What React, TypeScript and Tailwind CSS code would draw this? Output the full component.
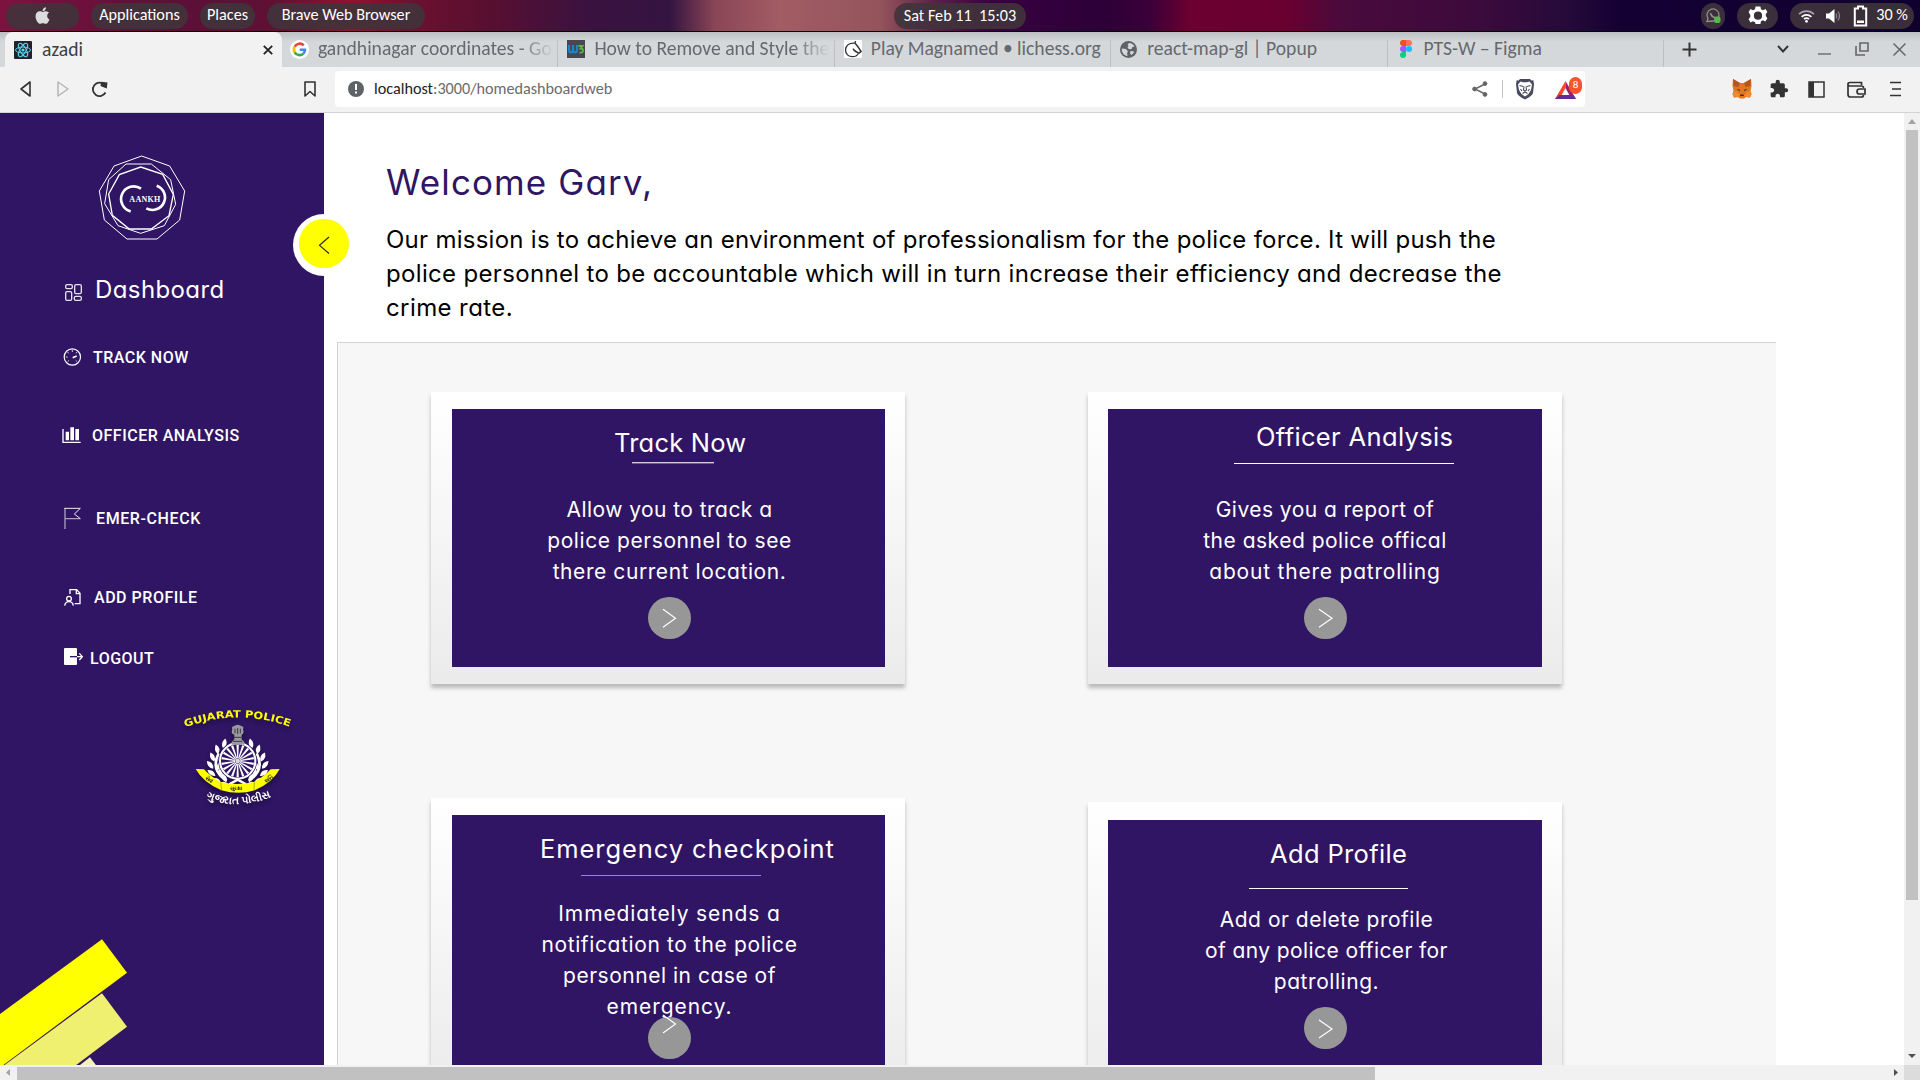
import type { ReactNode } from "react";
import { FaApple } from "react-icons/fa";
import { MdExtension } from "react-icons/md";

const UI = "font-['Carlito','Lato',sans-serif]";
const POP = "font-['Inter',sans-serif] [font-feature-settings:'cv11']";
const ROB = "font-['Roboto',sans-serif] font-medium text-[16px] leading-6 text-white whitespace-pre";

function Pill({ className, children }: { className: string; children: ReactNode }) {
  return (
    <div className={`flex h-[26px] shrink-0 items-center justify-center whitespace-pre rounded-full bg-[#3f343b]/90 ${className}`}>
      {children}
    </div>
  );
}

function TopBar() {
  return (
    <header
      className={`flex h-8 items-center border-b border-black bg-[linear-gradient(90deg,#7d1240_0px,#65103a_120px,#5c1038_170px,#5f1034_270px,#8a1630_350px,#6e1030_410px,#5a0f2f_480px,#3a1240_590px,#341440_670px,#8a4656_715px,#a25c64_780px,#94545c_880px,#5c2048_935px,#3a0042_990px,#2c0038_1100px,#3a0038_1150px,#6c0030_1190px,#680030_1290px,#4a0a3c_1340px,#3c0a3c_1480px,#240a3a_1570px,#150034_1620px,#0f0030_1920px)] pl-1.5 pr-1.5 text-[16.2px] leading-none text-white ${UI}`}
    >
      <Pill className="w-[73px]">
        <FaApple className="size-[19px] text-[#dcdcdc]" />
      </Pill>
      <Pill className="ml-3 w-[97px]">Applications</Pill>
      <Pill className="ml-3 w-[55px]">Places</Pill>
      <Pill className="ml-3 w-[158px]">Brave Web Browser</Pill>
      <Pill className="ml-[469px] w-[132px] pt-0.5">{"Sat Feb 11  15:03"}</Pill>
      <Pill className="ml-auto w-6">
        <svg width="16" height="17" viewBox="0 0 16 17" fill="none">
          <path d="M2 14.5 3 11.3A6 6 0 1 1 8 14l-6 .5Z" stroke="#8f8f8f" strokeWidth="1.3" />
          <path d="M5.5 6c.5 2.500 2 4 4.500 4.500" stroke="#8f8f8f" strokeWidth="1.5" />
          <rect x="9" y="9.500" width="6.500" height="6.500" rx="2" fill="#55b848" />
        </svg>
      </Pill>
      <Pill className="ml-3 w-[41px]">
        <svg width="20" height="20" viewBox="0 0 20 20">
          <path
            fillRule="evenodd"
            fill="#fff"
            d="M7.600 0.500h4.800l.6 2.800 2 .9 2.500-1.300 1.900 3.200-1.600 2v2l1.600 2.100-2 3.200-2.500-1.200-1.900 1-.6 2.800H7.600L7 16.200l-2-1-2.500 1.200-1.900-3.200 1.700-2.100v-2L.6 6.100l1.900-3.200L5 4.200l2-.9zM10 5.600a4.100 4.100 0 1 0 0 8.200 4.100 4.100 0 0 0 0-8.200z"
          />
        </svg>
      </Pill>
      <Pill className="ml-3 w-[124px] pl-0.5">
        <svg width="17" height="14" viewBox="0 0 17 14" fill="none" strokeWidth="1.700">
          <path d="M1 5.200a10.500 10.500 0 0 1 15 0" stroke="#a9a4ae" />
          <path d="M3.600 7.800a7 7 0 0 1 9.800 0" stroke="#fff" />
          <path d="M6 10.200a3.500 3.500 0 0 1 5 0" stroke="#fff" />
          <circle cx="8.500" cy="12.300" r="1.400" fill="#fff" />
        </svg>
        <svg className="ml-[11px]" width="15" height="14" viewBox="0 0 15 14" fill="none">
          <path d="M0 4.500h3L8.500 0v14L3 9.500H0z" fill="#fff" />
          <path d="M10 4.500q1.500 2.500 0 5M12 2.500q3 4.500 0 9" stroke="#8d8893" strokeWidth="1.200" />
        </svg>
        <svg className="ml-3" width="15" height="22" viewBox="0 0 15 22" fill="none">
          <path d="M5 1.500h5v2h3.200v17H1.800v-17H5z" stroke="#fff" strokeWidth="2" />
          <rect x="4" y="15.500" width="7" height="2.500" fill="#fff" />
        </svg>
        <span className="ml-2">30 %</span>
      </Pill>
    </header>
  );
}

function ReactFavicon() {
  return (
    <svg width="18" height="18" viewBox="0 0 18 18" fill="none">
      <rect width="18" height="18" rx="1" fill="#20232a" />
      <g stroke="#5ccfee" strokeWidth="1">
        <ellipse cx="9" cy="9" rx="7.500" ry="3" />
        <ellipse cx="9" cy="9" rx="7.500" ry="3" transform="rotate(60 9 9)" />
        <ellipse cx="9" cy="9" rx="7.500" ry="3" transform="rotate(120 9 9)" />
      </g>
      <circle cx="9" cy="9" r="1.600" fill="#5ccfee" />
    </svg>
  );
}

function GoogleFavicon() {
  return (
    <svg width="19" height="19" viewBox="0 0 19 19" fill="none">
      <circle cx="9.500" cy="9.500" r="9.500" fill="#fff" />
      <g strokeWidth="2.600">
        <path d="M13.700 5.400A5.500 5.500 0 0 0 4.700 6.700" stroke="#ea4335" />
        <path d="M4.700 6.700a5.500 5.500 0 0 0 0 5.600" stroke="#fbbc05" />
        <path d="M4.700 12.300a5.500 5.500 0 0 0 8.600 1.300" stroke="#34a853" />
        <path d="M13.300 13.600A5.300 5.300 0 0 0 15 9.700H9.700" stroke="#4285f4" />
      </g>
    </svg>
  );
}

function W3Favicon() {
  return (
    <svg width="18" height="18" viewBox="0 0 18 18" fill="none">
      <rect width="18" height="18" fill="#454853" />
      <path d="M2 5v4.500q0 3 2 3t2-3V5m0 4.500q0 3 2 3t2-3V5" stroke="#1689cc" strokeWidth="2" />
      <path d="M11.500 6h4l-2 2.500q2.500 0 2.500 2.200 0 2.300-3.500 1.800" stroke="#6fae3a" strokeWidth="1.800" />
    </svg>
  );
}

function LichessFavicon() {
  return (
    <svg width="18" height="18" viewBox="0 0 18 18" fill="none">
      <rect width="18" height="18" rx="1" fill="#fff" />
      <path d="M11.500 1 11 3.200C5 2.500 1.500 5.500 1.500 10c0 4 3 6.700 6.800 6.700 3 0 5-1.200 6-3.200" stroke="#333" strokeWidth="1.300" />
      <path d="M11 3.200c2 1.800 4 5 6 8.300l-2 1.600c-2.500-1-6-3.300-5.500-4.700" stroke="#333" strokeWidth="1.500" />
    </svg>
  );
}

function GlobeFavicon() {
  return (
    <svg width="17" height="17" viewBox="0 0 17 17">
      <circle cx="8.500" cy="8.500" r="8.500" fill="#5f6368" />
      <path d="M1.800 7.500 6 8l2 2.500-1 1.500.5 3C4 14.500 1.500 11.500 1.800 7.500zM9 1.900c2.500 0 4.600 1.500 5.600 3.600l-2.100.5-1 2-2.500.2-1.500-1.700 1-1.500L7.500 4z" fill="#d4d8db" />
      <path d="m10.500 10 3 .2.500 1.300-2.500 2.500-1.500-1.500z" fill="#d4d8db" />
    </svg>
  );
}

function FigmaFavicon() {
  return (
    <svg width="12" height="18" viewBox="0 0 12 18">
      <path d="M3 0h3v6H3a3 3 0 0 1 0-6z" fill="#f24e1e" />
      <path d="M6 0h3a3 3 0 0 1 0 6H6z" fill="#ff7262" />
      <path d="M3 6h3v6H3a3 3 0 0 1 0-6z" fill="#a259ff" />
      <circle cx="9" cy="9" r="3" fill="#1abcfe" />
      <path d="M3 12h3v3a3 3 0 1 1-3-3z" fill="#0acf83" />
    </svg>
  );
}

const tabs: { icon: ReactNode; title: string; fade?: boolean; pad: string; gap: string }[] = [
  { icon: <GoogleFavicon />, title: "gandhinagar coordinates - Goo", fade: true, pad: "pl-2", gap: "ml-[9px]" },
  { icon: <W3Favicon />, title: "How to Remove and Style the", fade: true, pad: "pl-[9px]", gap: "ml-[9px]" },
  { icon: <LichessFavicon />, title: "Play Magnamed • lichess.org", pad: "pl-[9px]", gap: "ml-[9px]" },
  { icon: <GlobeFavicon />, title: "react-map-gl | Popup", pad: "pl-[9px]", gap: "ml-[10px]" },
  { icon: <FigmaFavicon />, title: "PTS-W – Figma", pad: "pl-3", gap: "ml-3" },
];

function TabStrip() {
  return (
    <div className={`flex h-[35px] bg-[linear-gradient(180deg,#bcc0c3,#d4d8db_10px)] pl-[5px] text-[19.6px] leading-none ${UI}`}>
      <div className="flex w-[277px] items-center rounded-t-lg bg-[#f2f2f2] pl-[9px] pr-[9px] text-[#3b3f44]">
        <ReactFavicon />
        <span className="ml-2.5">azadi</span>
        <svg className="ml-auto" width="10" height="10" viewBox="0 0 10 10" stroke="#222" strokeWidth="1.800">
          <path d="m.8.8 8.400 8.400M9.200.8.8 9.200" />
        </svg>
      </div>
      {tabs.map((t) => (
        <div key={t.title} className={`flex w-[276.400px] shrink-0 items-center pb-px text-[#66696d] ${t.pad}`}>
          {t.icon}
          <div className={`w-[235px] overflow-hidden whitespace-nowrap py-1 ${t.gap} ${t.fade ? "[mask-image:linear-gradient(90deg,#000_200px,transparent_236px)]" : ""}`}>
            {t.title}
          </div>
          <div className="-mb-px ml-auto h-[27px] w-px shrink-0 self-end bg-[#bcc1c6]" />
        </div>
      ))}
      <div className="flex grow items-center pb-px pl-[18px] pr-3.5">
        <svg width="15" height="15" viewBox="0 0 15 15" stroke="#333" strokeWidth="2"><path d="M7.500.5v14M.5 7.500h14" /></svg>
        <svg className="ml-auto" width="12" height="8" viewBox="0 0 12 8" fill="none" stroke="#333" strokeWidth="1.900"><path d="m1 1 5 5.500L11 1" /></svg>
        <svg className="ml-[29px]" width="13" height="16" viewBox="0 0 13 16"><path d="M0 13h13" stroke="#777" strokeWidth="1.600" /></svg>
        <svg className="ml-6" width="14" height="14" viewBox="0 0 14 14" fill="none" stroke="#666" strokeWidth="1.600"><path d="M5 1h8v8H5zM1 4v9h9" /></svg>
        <svg className="ml-6" width="13" height="13" viewBox="0 0 13 13" stroke="#666" strokeWidth="1.500"><path d="m.5.5 12 12M12.500.5l-12 12" /></svg>
      </div>
    </div>
  );
}

function Toolbar() {
  return (
    <div className={`flex h-[46px] items-center border-b border-[#d0d3d8] bg-[#f2f2f2] pb-px pl-5 pr-[19px] ${UI}`}>
      <svg width="11" height="16" viewBox="0 0 11 16" fill="none" stroke="#333" strokeWidth="1.600" strokeLinejoin="round"><path d="M10 1v14L1 8z" /></svg>
      <svg className="ml-[26px]" width="12" height="16" viewBox="0 0 12 16" fill="none" stroke="#b5b5b5" strokeWidth="1.500" strokeLinejoin="round"><path d="M1 1v14l10-7z" /></svg>
      <svg className="ml-[22px]" width="17" height="17" viewBox="0 0 17 17" fill="none" stroke="#333" strokeWidth="1.800">
        <path d="M13.200 3.500A6.700 6.700 0 1 0 14.500 11.500" />
        <path d="M10.500 4.500 11 1.800l4.500.4-.5 4z" fill="#333" />
      </svg>
      <svg className="ml-[196px]" width="12" height="16" viewBox="0 0 12 16" fill="none" stroke="#333" strokeWidth="1.600" strokeLinejoin="round"><path d="M1 1h10v14l-5-4.500L1 15z" /></svg>
      <div className="ml-[19px] flex h-9 w-[1250px] items-center rounded bg-white pl-[13px] pr-[3px]">
        <svg width="16" height="16" viewBox="0 0 16 16"><circle cx="8" cy="8" r="8" fill="#5f6368" /><path d="M7 3h2v6H7zM7 10.500h2v2H7z" fill="#fff" /></svg>
        <span className="ml-2.5 text-[16.2px] text-[#6b6b6b]"><span className="text-[#222]">localhost</span>:3000/homedashboardweb</span>
        <svg className="ml-auto" width="16" height="16" viewBox="0 0 16 16" fill="#666" stroke="#666">
          <path d="M13 3 3 8l10 5" fill="none" strokeWidth="1.400" /><circle cx="13" cy="2.600" r="1.900" /><circle cx="2.600" cy="8" r="1.900" /><circle cx="13" cy="13.400" r="1.900" />
        </svg>
        <div className="ml-3.5 h-[18px] w-px bg-[#c4c4c4]" />
        <svg className="ml-3" width="20" height="22" viewBox="0 0 20 22">
          <path d="M5 1h10l1.300 1.500 2-.3L19 6l-1 9c-.5 2-3 4-8 6.500C5 19 2.500 17 2 15L1 6l.7-3.800 2 .3z" fill="#484a5e" />
          <path d="M5.500 3.500 8 4.200h4l2.500-.7L17 6.500 16 12l-2.500 4L10 18.500 6.500 16 4 12 3 6.500z" fill="#fff" />
          <path d="m4.500 7.500 3.800 1M15.500 7.500l-3.800 1M9 8.500 8.500 12l1.500 1.200 1.500-1.200L11 8.500M7.500 15.500 10 14l2.500 1.500M5.500 11l1.500 2m7.500-2L13 13" stroke="#484a5e" strokeWidth="1.100" fill="none" />
        </svg>
        <div className="relative ml-5 h-7 w-[27px]">
          <svg width="27" height="28" viewBox="0 0 27 28">
            <path d="M10.500 6 0 24h4.500l6-11z" fill="#ff4724" />
            <path d="m10.500 6 10.500 18h-4.500l-6-11z" fill="#9e1f63" />
            <path d="M0 24h21l-3-4H4z" fill="#662d91" />
          </svg>
          <span className="absolute left-3.5 top-0.5 flex h-[17px] w-[13px] items-center justify-center rounded-full bg-[#fb542b] text-[11px] text-white">8</span>
        </div>
      </div>
      <svg className="ml-auto" width="20" height="20" viewBox="0 0 20 20">
        <path d="M1 0 8 4h4l7-4 .5 7-1 5 1 3-1.500 3.500-4-.5-2 1.500H8L6 18l-4 .5L.5 15l1-3-1-5z" fill="#e2761b" />
        <path d="M1 0l7 4-1.500 4L1.500 7zM19 0l-7 4 1.500 4 5-1z" fill="#b5571c" />
        <path d="m4.500 10 3 .5.5 2zM15.500 10l-3 .5-.5 2zM8 17l.5-1.500h3L12 17z" fill="#233447" />
        <path d="m1.500 12 4 1 2.500 4-2 1-4 .5L.5 15zM18.500 12l-4 1-2.500 4 2 1 4 .5 1.500-3.500z" fill="#f08a2b" />
      </svg>
      <MdExtension className="ml-[17px] size-5 text-[#333]" />
      <svg className="ml-[19px]" width="17" height="17" viewBox="0 0 17 17"><path d="M1 1h15v15H1z" fill="none" stroke="#333" strokeWidth="1.500" /><path d="M1 1h5v15H1z" fill="#333" /></svg>
      <svg className="ml-[22px]" width="19" height="18" viewBox="0 0 19 18" fill="none" stroke="#333" strokeWidth="1.700"><path d="M14.500 5V2.500H3Q1 2.500 1 4v10.500Q1 17 3.500 17h11q2 0 2-2M1 4.200Q1 6 3 6h11.500q2 0 2 2" /><path d="M18 9h-5.500a2.500 2.500 0 0 0 0 5H18z" /></svg>
      <svg className="ml-6" width="11" height="16" viewBox="0 0 11 16" stroke="#333" strokeWidth="1.600"><path d="M0 1.500h11M2 8h9M0 14.500h11" /></svg>
    </div>
  );
}

function AankhLogo() {
  return (
    <svg className="ml-24" width="92" height="88" viewBox="288 132 276 264" fill="none" stroke="#fff">
      <path strokeWidth="3" d="M425 138 509 168 554 243 539 330 471 387H381L313 330 298 243 342 168Z" />
      <path strokeWidth="3" d="M378 162H454L512 209 527 283 493 347 422 370 354 347 314 281 326 209Z" />
      <path strokeWidth="4" d="M422 171 488 193 520 253 507 317 454 357H388L337 316 326 252 358 194Z" />
      <path strokeWidth="8" d="M423 236A38 38 0 1 0 392 304" />
      <path strokeWidth="8" d="M470 227A37.500 37.500 0 1 1 439 295" />
      <text x="388" y="276" fontSize="24" fontWeight="700" fill="#fff" stroke="none" textLength="93" fontFamily="Liberation Serif, serif">AANKH</text>
    </svg>
  );
}

function PoliceEmblem() {
  const leaf = "M0 3q-13-13-1-30q15 14 1 30z";
  return (
    <svg className="ml-[180px] mt-9 drop-shadow-[0_3px_2px_rgba(0,0,0,0.35)]" width="115" height="100" viewBox="60 51 345 300" fill="none">
      <defs>
        <path id="arc-top" d="M76 112Q232 53 394 112" />
        <path id="arc-bottom" d="M138 324Q235 364 336 320" />
        <path id="arc-ribbon" d="M131 264Q235 338 340 264" />
      </defs>
      <text fill="#ff0" fontSize="30" fontWeight="700" fontFamily="DejaVu Sans, sans-serif"><textPath href="#arc-top" textLength="320" lengthAdjust="spacingAndGlyphs">GUJARAT POLICE</textPath></text>
      {[0, 1].map((side) => (
        <g key={side} fill="#fff" transform={side ? "translate(466 0) scale(-1 1)" : undefined}>
          {[
            [190, 172, 15], [174, 190, -12], [188, 192, 45], [162, 212, -22], [178, 212, 30], [158, 234, -38],
            [174, 238, 20], [164, 256, -52], [182, 256, 5], [180, 276, -68], [198, 274, -25], [204, 284, -80],
          ].map(([x, y, r]) => (
            <path key={`${x}-${y}`} d={leaf} transform={`translate(${x} ${y}) rotate(${r})`} />
          ))}
          <path d="M176 190Q150 240 200 272" stroke="#fff" strokeWidth="8" fill="none" />
        </g>
      ))}
      <circle cx="233" cy="213" r="58" fill="#2f1563" />
      <circle cx="233" cy="213" r="53" fill="#2f1563" stroke="#fff" strokeWidth="6" />
      {Array.from({ length: 18 }, (_, i) => (
        <path key={i} d="M231.500 205 229.500 164h7l-2 41z" fill="#fff" transform={`rotate(${i * 20} 233 213)`} />
      ))}
      <circle cx="233" cy="213" r="7" fill="#ddd" />
      <path d="m208 283 25-14 25 14" stroke="#fff" strokeWidth="7" />
      <path d="M217 118q-3-8 4-9 12-9 24 0 8 1 4 9l2 8q-2 8-6 8v14l8 8v8h-38v-8l8-8v-14q-8-2-8-8z" fill="#9a9a9a" />
      <path d="M225 116v14m8-16v18m8-16v14m-20 12h24m-26 12h28" stroke="#3b3550" strokeWidth="3" />
      <path d="M107 237l25 1q20 22 50 38 48 12 100 0 32-18 50-38l27-1q-20 40-75 64-48 15-100 0-55-24-77-64z" fill="#ff0" />
      <path d="M182 277l3 25M283 277l-1 25" stroke="#8a8a10" strokeWidth="2" />
      <text fill="#222" fontSize="16" fontWeight="700" fontFamily="Noto Sans, sans-serif"><textPath href="#arc-ribbon" startOffset="4">સેવા</textPath></text>
      <text x="211" y="299" fill="#222" fontSize="16" fontWeight="700" fontFamily="Noto Sans, sans-serif">સુરક્ષા</text>
      <text fill="#222" fontSize="16" fontWeight="700" fontFamily="Noto Sans, sans-serif"><textPath href="#arc-ribbon" startOffset="198">શાંતિ</textPath></text>
      <text fill="#fff" fontSize="32" fontWeight="700" fontFamily="Noto Sans, sans-serif"><textPath href="#arc-bottom">ગુજરાત પોલીસ</textPath></text>
    </svg>
  );
}

function Sidebar() {
  return (
    <aside className="relative flex w-[324px] shrink-0 flex-col bg-[#2f1563] pt-[41px]">
      <AankhLogo />
      <div className="mt-[33px] flex h-[30px] pl-[62px]">
        <svg width="24" height="30" viewBox="186 495 72 90" fill="none" stroke="#e6e1ee" strokeWidth="4">
          <rect x="197" y="524" width="20" height="12" rx="4" /><rect x="224" y="524" width="20" height="27" rx="4" />
          <rect x="197" y="545" width="18" height="26" rx="4" /><rect x="223" y="559" width="21" height="12" rx="4" />
        </svg>
        <span className={`ml-[9px] text-[24px] leading-[30px] tracking-[0.400px] text-white ${POP}`}>Dashboard</span>
      </div>
      <div className="mt-[41px] flex h-6 pl-[62px]">
        <svg width="24" height="24" viewBox="186 708 72 72" fill="none" stroke="#fff">
          <circle cx="217" cy="741" r="24.500" strokeWidth="3.500" />
          <path d="M217 720v6M203 726l3 4M231 726l-3 4M197 741h6M203 755l4-4M231 755l-4-4" strokeWidth="3" stroke="#cfc8dd" />
          <path d="m218 743 12-5" strokeWidth="5" />
        </svg>
        <span className={`ml-[7px] tracking-[0.500px] ${ROB}`}>TRACK NOW</span>
      </div>
      <div className="mt-[54px] flex h-6 pl-[62px]">
        <svg width="24" height="24" viewBox="186 72 72 72" fill="#fff">
          <path d="M187 87h4v38h51v4h-55zM197 95h10v26h-10zM211 82h11v39h-11zM226 87h11v34h-11z" />
        </svg>
        <span className={`ml-1.5 tracking-[0.500px] ${ROB}`}>OFFICER ANALYSIS</span>
      </div>
      <div className="mt-[59px] flex h-6 pl-[62px]">
        <svg width="24" height="24" viewBox="186 321 72 72" fill="none">
          <path d="M195 324v63M195 356h46" stroke="#a99fc0" strokeWidth="4" />
          <path d="M193 325h48l-18 17 18 14" stroke="#ece8f2" strokeWidth="3" />
        </svg>
        <span className={`ml-2.5 tracking-[0.600px] ${ROB}`}>EMER-CHECK</span>
      </div>
      <div className="mt-[55px] flex h-6 pl-[62px]">
        <svg width="24" height="24" viewBox="186 558 72 72" fill="none" stroke="#fff" strokeWidth="4">
          <path d="M210 582v-13h20l10 11v31h-16M229 569v12h11" />
          <circle cx="207" cy="596" r="7" /><path d="M194 617q2-12 13-12t13 12" />
        </svg>
        <span className={`ml-2 tracking-[0.520px] ${ROB}`}>ADD PROFILE</span>
      </div>
      <div className="mt-[37px] flex h-6 pl-[62px]">
        <svg width="24" height="24" viewBox="186 741 72 72" fill="none">
          <rect x="192" y="744" width="39" height="51" rx="3" fill="#fff" />
          <path d="M210 770h21" stroke="#2f1563" strokeWidth="4" />
          <path d="M231 770h16m-9-10 9 10-9 10" stroke="#fff" strokeWidth="4" />
        </svg>
        <span className={`ml-1 tracking-[0.500px] ${ROB}`}>LOGOUT</span>
      </div>
      <PoliceEmblem />
      <svg className="mt-auto" width="130" height="130" viewBox="0 105 390 390">
        <path d="M306 118 381 218 5 499H0V342Z" fill="#ff0" />
        <path d="M306 280 381 380 226 497H11Z" fill="#f0f070" />
        <path d="M270 472 290 498H236Z" fill="#f4f1bd" />
      </svg>
      <div className="absolute left-[293px] top-[101px] size-[62px] rounded-full bg-white pl-[5.500px] pt-[5px]">
        <div className="h-[49px] w-[50px] rounded-full bg-[#ff0]">
          <svg width="50" height="49" viewBox="0 0 50 49" fill="none" stroke="#222" strokeWidth="1.100"><path d="M30 18 20.500 26.300 30 34.500" /></svg>
        </div>
      </div>
    </aside>
  );
}

type CardProps = {
  title: string;
  frame: string;
  panel: string;
  titleBox: string;
  rule: string;
  body: string;
  lines: [string, string][];
  button: string;
  arrow: string;
};

function Card(c: CardProps) {
  return (
    <section className={`h-[292px] w-[474px] bg-linear-to-b from-white to-[#ebebeb] shadow-[0_4px_4px_rgba(0,0,0,0.25)] ${c.frame}`}>
      <div className={`flex h-[258px] flex-col bg-[#2f1563] text-white ${POP} ${c.panel}`}>
        <h2 className={`h-[30px] whitespace-nowrap text-[25.500px] leading-[30px] ${c.titleBox}`}>{c.title}</h2>
        <div className={c.rule} />
        <div className={`text-center text-[21px] leading-[31px] ${c.body}`}>
          {c.lines.map(([text, tracking]) => (
            <div key={text} className={tracking}>{text}</div>
          ))}
        </div>
        <button className={`h-[42px] w-[43px] shrink-0 rounded-full bg-[#979797] ${c.button}`}>
          <svg className="overflow-visible" width="43" height="42" viewBox="0 0 43 42" fill="none" stroke="#fff" strokeWidth="1.200"><path d={c.arrow} /></svg>
        </button>
      </div>
    </section>
  );
}

const cards: CardProps[] = [
  {
    title: "Track Now",
    frame: "pl-[21px] pt-[17px]",
    panel: "w-[433px]",
    titleBox: "mt-[19px] ml-[162px] tracking-[0.200px]",
    rule: "mt-1 ml-[180px] h-0.5 w-[82px] border-b border-[#705c93] bg-[#d2cadd]",
    body: "mt-[30px] pl-0.5",
    lines: [["Allow you to track a", "tracking-[0.450px]"], ["police personnel to see", "tracking-[0.580px]"], ["there current location.", "tracking-[0.580px]"]],
    button: "mt-2.5 ml-[196px]",
    arrow: "m15 12.300 12.500 9L15 30.300",
  },
  {
    title: "Officer Analysis",
    frame: "pl-5 pt-[17px]",
    panel: "w-[434px]",
    titleBox: "mt-[13px] ml-[148px] tracking-[0.350px]",
    rule: "mt-[11px] ml-[126px] h-px w-[220px] bg-white",
    body: "mt-[30px]",
    lines: [["Gives you a report of", "tracking-[0.450px]"], ["the asked police offical", "tracking-[0.500px]"], ["about there patrolling", "tracking-[0.790px]"]],
    button: "mt-2.5 ml-[196px]",
    arrow: "m15 12.300 13 9-13 9",
  },
  {
    title: "Emergency checkpoint",
    frame: "pl-[21px] pt-[17px]",
    panel: "w-[433px]",
    titleBox: "mt-[19px] ml-[88px] tracking-[0.920px]",
    rule: "mt-[11px] ml-[129px] h-px w-[180px] bg-[#9788b2]",
    body: "mt-[22px] pl-0.5",
    lines: [["Immediately sends a", "tracking-[0.870px]"], ["notification to the police", "tracking-[0.620px]"], ["personnel in case of", "tracking-[0.520px]"], ["emergency.", "tracking-[0.950px]"]],
    button: "-mt-[5px] ml-[196px]",
    arrow: "m15-2 12.500 9L15 16",
  },
  {
    title: "Add Profile",
    frame: "mt-1 pl-5 pt-[18px]",
    panel: "w-[434px]",
    titleBox: "mt-[19px] ml-[162px] tracking-[0.350px]",
    rule: "mt-[19px] ml-[141px] h-px w-[159px] bg-white",
    body: "mt-[15px] pl-[3px]",
    lines: [["Add or delete profile", "tracking-[0.500px]"], ["of any police officer for", "tracking-[0.400px]"], ["patrolling.", "tracking-[0.550px]"]],
    button: "mt-2.5 ml-[196px]",
    arrow: "m15 13 13 9-13 9",
  },
];

function Main() {
  return (
    <main className={`flex min-w-0 grow flex-col overflow-hidden bg-white pl-[13px] pt-[49px] ${POP}`}>
      <h1 className="pl-[49px] text-[35px] leading-10 tracking-[1.100px] text-[#2f1563]">Welcome Garv,</h1>
      <div className="mt-[21px] whitespace-nowrap pl-[49px] text-[24px] leading-[34px] text-black">
        <div className="tracking-[0.265px]">Our mission is to achieve an environment of professionalism for the police force. It will push the</div>
        <div className="tracking-[0.330px]">police personnel to be accountable which will in turn increase their efficiency and decrease the</div>
        <div className="tracking-[0.400px]">crime rate.</div>
      </div>
      <div className="mt-[17px] grid w-[1439px] grow grid-cols-[474px_474px] grid-rows-[292px_292px] gap-x-[183px] gap-y-[114px] border-l border-t border-[#d3d3d3] bg-[#f7f7f7] pl-[93px] pt-[49px]">
        {cards.map((c) => <Card key={c.title} {...c} />)}
      </div>
    </main>
  );
}

export default function App() {
  return (
    <div className="flex h-[1080px] w-[1920px] flex-col overflow-hidden bg-white">
      <TopBar />
      <TabStrip />
      <Toolbar />
      <div className="flex h-[952px] shrink-0">
        <Sidebar />
        <Main />
        <div className="flex w-4 shrink-0 flex-col items-center bg-[#f1f1f1]">
          <svg className="mt-1.5 shrink-0" width="8" height="5" viewBox="0 0 8 5" fill="#a3a3a3"><path d="M4 0 8 5H0z" /></svg>
          <div className="mt-1.5 h-[770px] w-3 shrink-0 bg-[#c1c1c1]" />
          <svg className="mb-[7px] mt-auto" width="8" height="4" viewBox="0 0 8 4" fill="#505050"><path d="M4 4 8 0H0z" /></svg>
        </div>
      </div>
      <div className="flex h-[15px] items-center bg-[#f1f1f1]">
        <svg className="ml-1.5" width="4" height="7" viewBox="0 0 4 7" fill="#a3a3a3"><path d="M0 3.500 4 0v7z" /></svg>
        <div className="ml-[7px] mt-0.5 h-[13px] w-[1358px] bg-[#c1c1c1]" />
        <svg className="ml-auto mr-1.5" width="4" height="7" viewBox="0 0 4 7" fill="#505050"><path d="M4 3.500 0 0v7z" /></svg>
        <div className="h-full w-4 bg-[#dcdcdc]" />
      </div>
    </div>
  );
}
